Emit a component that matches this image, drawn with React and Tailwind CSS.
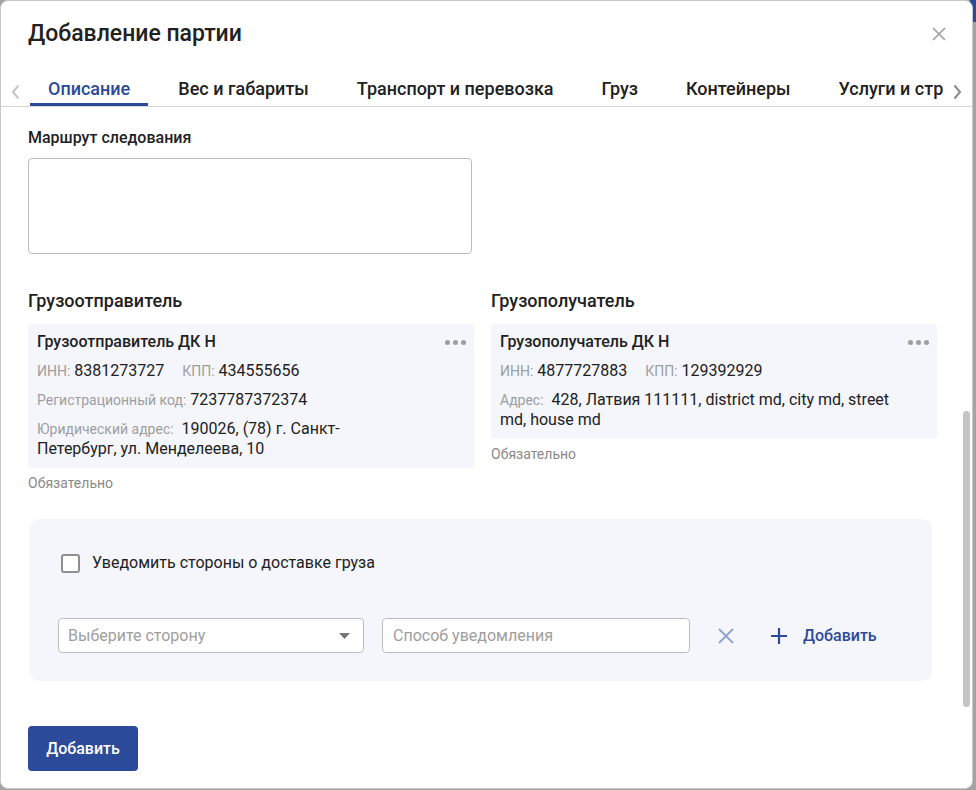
import React from 'react'

const tabs = ['Описание', 'Вес и габариты', 'Транспорт и перевозка', 'Груз', 'Контейнеры', 'Услуги и страхование']

const Dots = () => (
  <div className="flex items-center gap-[3px]">
    <span className="w-[5px] h-[5px] rounded-full bg-[#9e9e9e]" />
    <span className="w-[5px] h-[5px] rounded-full bg-[#9e9e9e]" />
    <span className="w-[5px] h-[5px] rounded-full bg-[#9e9e9e]" />
  </div>
)

const Field = ({ label, value }) => (
  <span>
    <span className="text-[14px] text-[#9e9e9e]">{label}</span>{' '}
    <span className="text-[16px] text-[#212121]">{value}</span>
  </span>
)

const App = () => {
  return (
    <div className="w-[976px] h-[790px] bg-[#a3a3a3] relative overflow-hidden" style={{ fontFamily: 'Roboto, "Noto Sans", sans-serif' }}>
      {/* page behind the modal */}
      <div className="absolute right-0 top-0 w-[6px] h-[22px] bg-[#2b4a9a]" />

      {/* Dialog */}
      <div className="relative w-[973px] h-[789px] bg-white border border-[#c9c9c9] rounded-[8px] overflow-hidden flex flex-col">
        {/* Header */}
        <div className="flex items-center justify-between pl-[27px] pr-[26px] pt-[6px] h-[60px]">
          <h2 className="text-[23px] font-medium text-[#212121] leading-[28px]">Добавление партии</h2>
          <svg width="14" height="14" viewBox="0 0 14 14" className="text-[#9e9e9e]">
            <path d="M1 1 L13 13 M13 1 L1 13" stroke="currentColor" strokeWidth="1.6" />
          </svg>
        </div>

        {/* Tabs */}
        <div className="flex items-stretch h-[46px] border-b border-[#d6d6d6]">
          <div className="w-[29px] flex items-center justify-center pt-[16px]">
            <svg width="9" height="16" viewBox="0 0 9 16"><path d="M7.5 1.5 L2 8 L7.5 14.5" fill="none" stroke="#c4c4c4" strokeWidth="2" /></svg>
          </div>
          <div className="flex-1 overflow-hidden flex gap-[12px]">
            {tabs.map((t, i) => (
              <div
                key={t}
                className={`shrink-0 px-[18px] flex items-center text-[18px] font-medium whitespace-nowrap border-b-[3px] ${i === 0 ? 'text-[#2b4a9a] border-[#2b4a9a]' : 'text-[#212121] border-transparent'}`}
              >
                <span className="pt-[13px]">{t}</span>
              </div>
            ))}
          </div>
          <div className="w-[29px] flex items-center justify-center pt-[16px]">
            <svg width="9" height="16" viewBox="0 0 9 16"><path d="M1.5 1.5 L7 8 L1.5 14.5" fill="none" stroke="#8a8a8a" strokeWidth="2" /></svg>
          </div>
        </div>

        {/* Body */}
        <div className="flex-1 px-[27px] pt-[21px]">
          <label className="block text-[16px] font-medium text-[#212121] leading-[20px]">Маршрут следования</label>
          <textarea className="mt-[10px] block w-[444px] h-[96px] border border-[#bdbdbd] rounded-[4px] resize-none outline-none" />

          <div className="mt-[36px] grid grid-cols-[446px_446px] gap-x-[17px]">
            {/* Shipper */}
            <div>
              <h3 className="text-[18px] font-medium text-[#212121] leading-[22px]">Грузоотправитель</h3>
              <div className="mt-[12px] bg-[#f4f6fb] rounded-[4px] pl-[9px] pr-[8px] pt-[8px] pb-[9px]">
                <div className="flex items-center justify-between">
                  <span className="text-[16px] font-medium text-[#212121] leading-[20px]">Грузоотправитель ДК Н</span>
                  <Dots />
                </div>
                <div className="mt-[9px] leading-[20px] flex gap-[18px]">
                  <Field label="ИНН:" value="8381273727" />
                  <Field label="КПП:" value="434555656" />
                </div>
                <div className="mt-[9px] leading-[20px]">
                  <Field label="Регистрационный код:" value="7237787372374" />
                </div>
                <div className="mt-[9px] leading-[20px] w-[340px]">
                  <span className="text-[14px] text-[#9e9e9e]">Юридический адрес:</span>
                  <span className="text-[16px] text-[#212121]">&nbsp; 190026, (78) г. Санкт-Петербург, ул. Менделеева, 10</span>
                </div>
              </div>
              <p className="mt-[6px] text-[14px] text-[#8a8a8a] leading-[18px]">Обязательно</p>
            </div>

            {/* Consignee */}
            <div>
              <h3 className="text-[18px] font-medium text-[#212121] leading-[22px]">Грузополучатель</h3>
              <div className="mt-[12px] bg-[#f4f6fb] rounded-[4px] pl-[9px] pr-[8px] pt-[8px] pb-[9px]">
                <div className="flex items-center justify-between">
                  <span className="text-[16px] font-medium text-[#212121] leading-[20px]">Грузополучатель ДК Н</span>
                  <Dots />
                </div>
                <div className="mt-[9px] leading-[20px] flex gap-[18px]">
                  <Field label="ИНН:" value="4877727883" />
                  <Field label="КПП:" value="129392929" />
                </div>
                <div className="mt-[9px] leading-[20px] w-[405px]">
                  <span className="text-[14px] text-[#9e9e9e]">Адрес:</span>
                  <span className="text-[16px] text-[#212121]">&nbsp; 428, Латвия 111111, district md, city md, street md, house md</span>
                </div>
              </div>
              <p className="mt-[6px] text-[14px] text-[#8a8a8a] leading-[18px]">Обязательно</p>
            </div>
          </div>

          {/* Notify box */}
          <div className="mt-[27px] ml-[2px] w-[902px] h-[162px] bg-[#f4f6fb] rounded-[10px] pl-[28px] pr-[28px] pt-[33px]">
            <label className="flex items-center gap-[12px]">
              <span className="w-[19px] h-[19px] border-2 border-[#8f8f8f] rounded-[3px] bg-white ml-[3px]" />
              <span className="text-[16px] text-[#212121] leading-[22px]">Уведомить стороны о доставке груза</span>
            </label>
            <div className="mt-[44px] flex items-center">
              <div className="w-[306px] h-[35px] bg-white border border-[#bdbdbd] rounded-[4px] flex items-center justify-between pl-[9px] pr-[13px]">
                <span className="text-[16px] text-[#9e9e9e]">Выберите сторону</span>
                <svg width="11" height="6" viewBox="0 0 11 6"><path d="M0 0 H11 L5.5 6 Z" fill="#757575" /></svg>
              </div>
              <div className="ml-[18px] w-[308px] h-[35px] bg-white border border-[#bdbdbd] rounded-[4px] flex items-center pl-[10px]">
                <span className="text-[16px] text-[#9e9e9e]">Способ уведомления</span>
              </div>
              <svg width="16" height="16" viewBox="0 0 16 16" className="ml-[28px]">
                <path d="M1 1 L15 15 M15 1 L1 15" stroke="#8fa3c8" strokeWidth="1.8" />
              </svg>
              <div className="ml-[37px] flex items-center gap-[16px] text-[#2b4a9a]">
                <svg width="16" height="16" viewBox="0 0 16 16">
                  <path d="M8 0 V16 M0 8 H16" stroke="#2b4a9a" strokeWidth="2.2" />
                </svg>
                <span className="text-[16px] font-medium">Добавить</span>
              </div>
            </div>
          </div>

          <button className="mt-[45px] w-[110px] h-[45px] bg-[#2b4a9a] rounded-[4px] text-white text-[16px] font-medium">
            Добавить
          </button>
        </div>

        {/* scrollbar thumb */}
        <div className="absolute right-[2px] top-[410px] w-[7px] h-[296px] rounded-full bg-[#c4c4c4]" />
      </div>
    </div>
  )
}

export default App
